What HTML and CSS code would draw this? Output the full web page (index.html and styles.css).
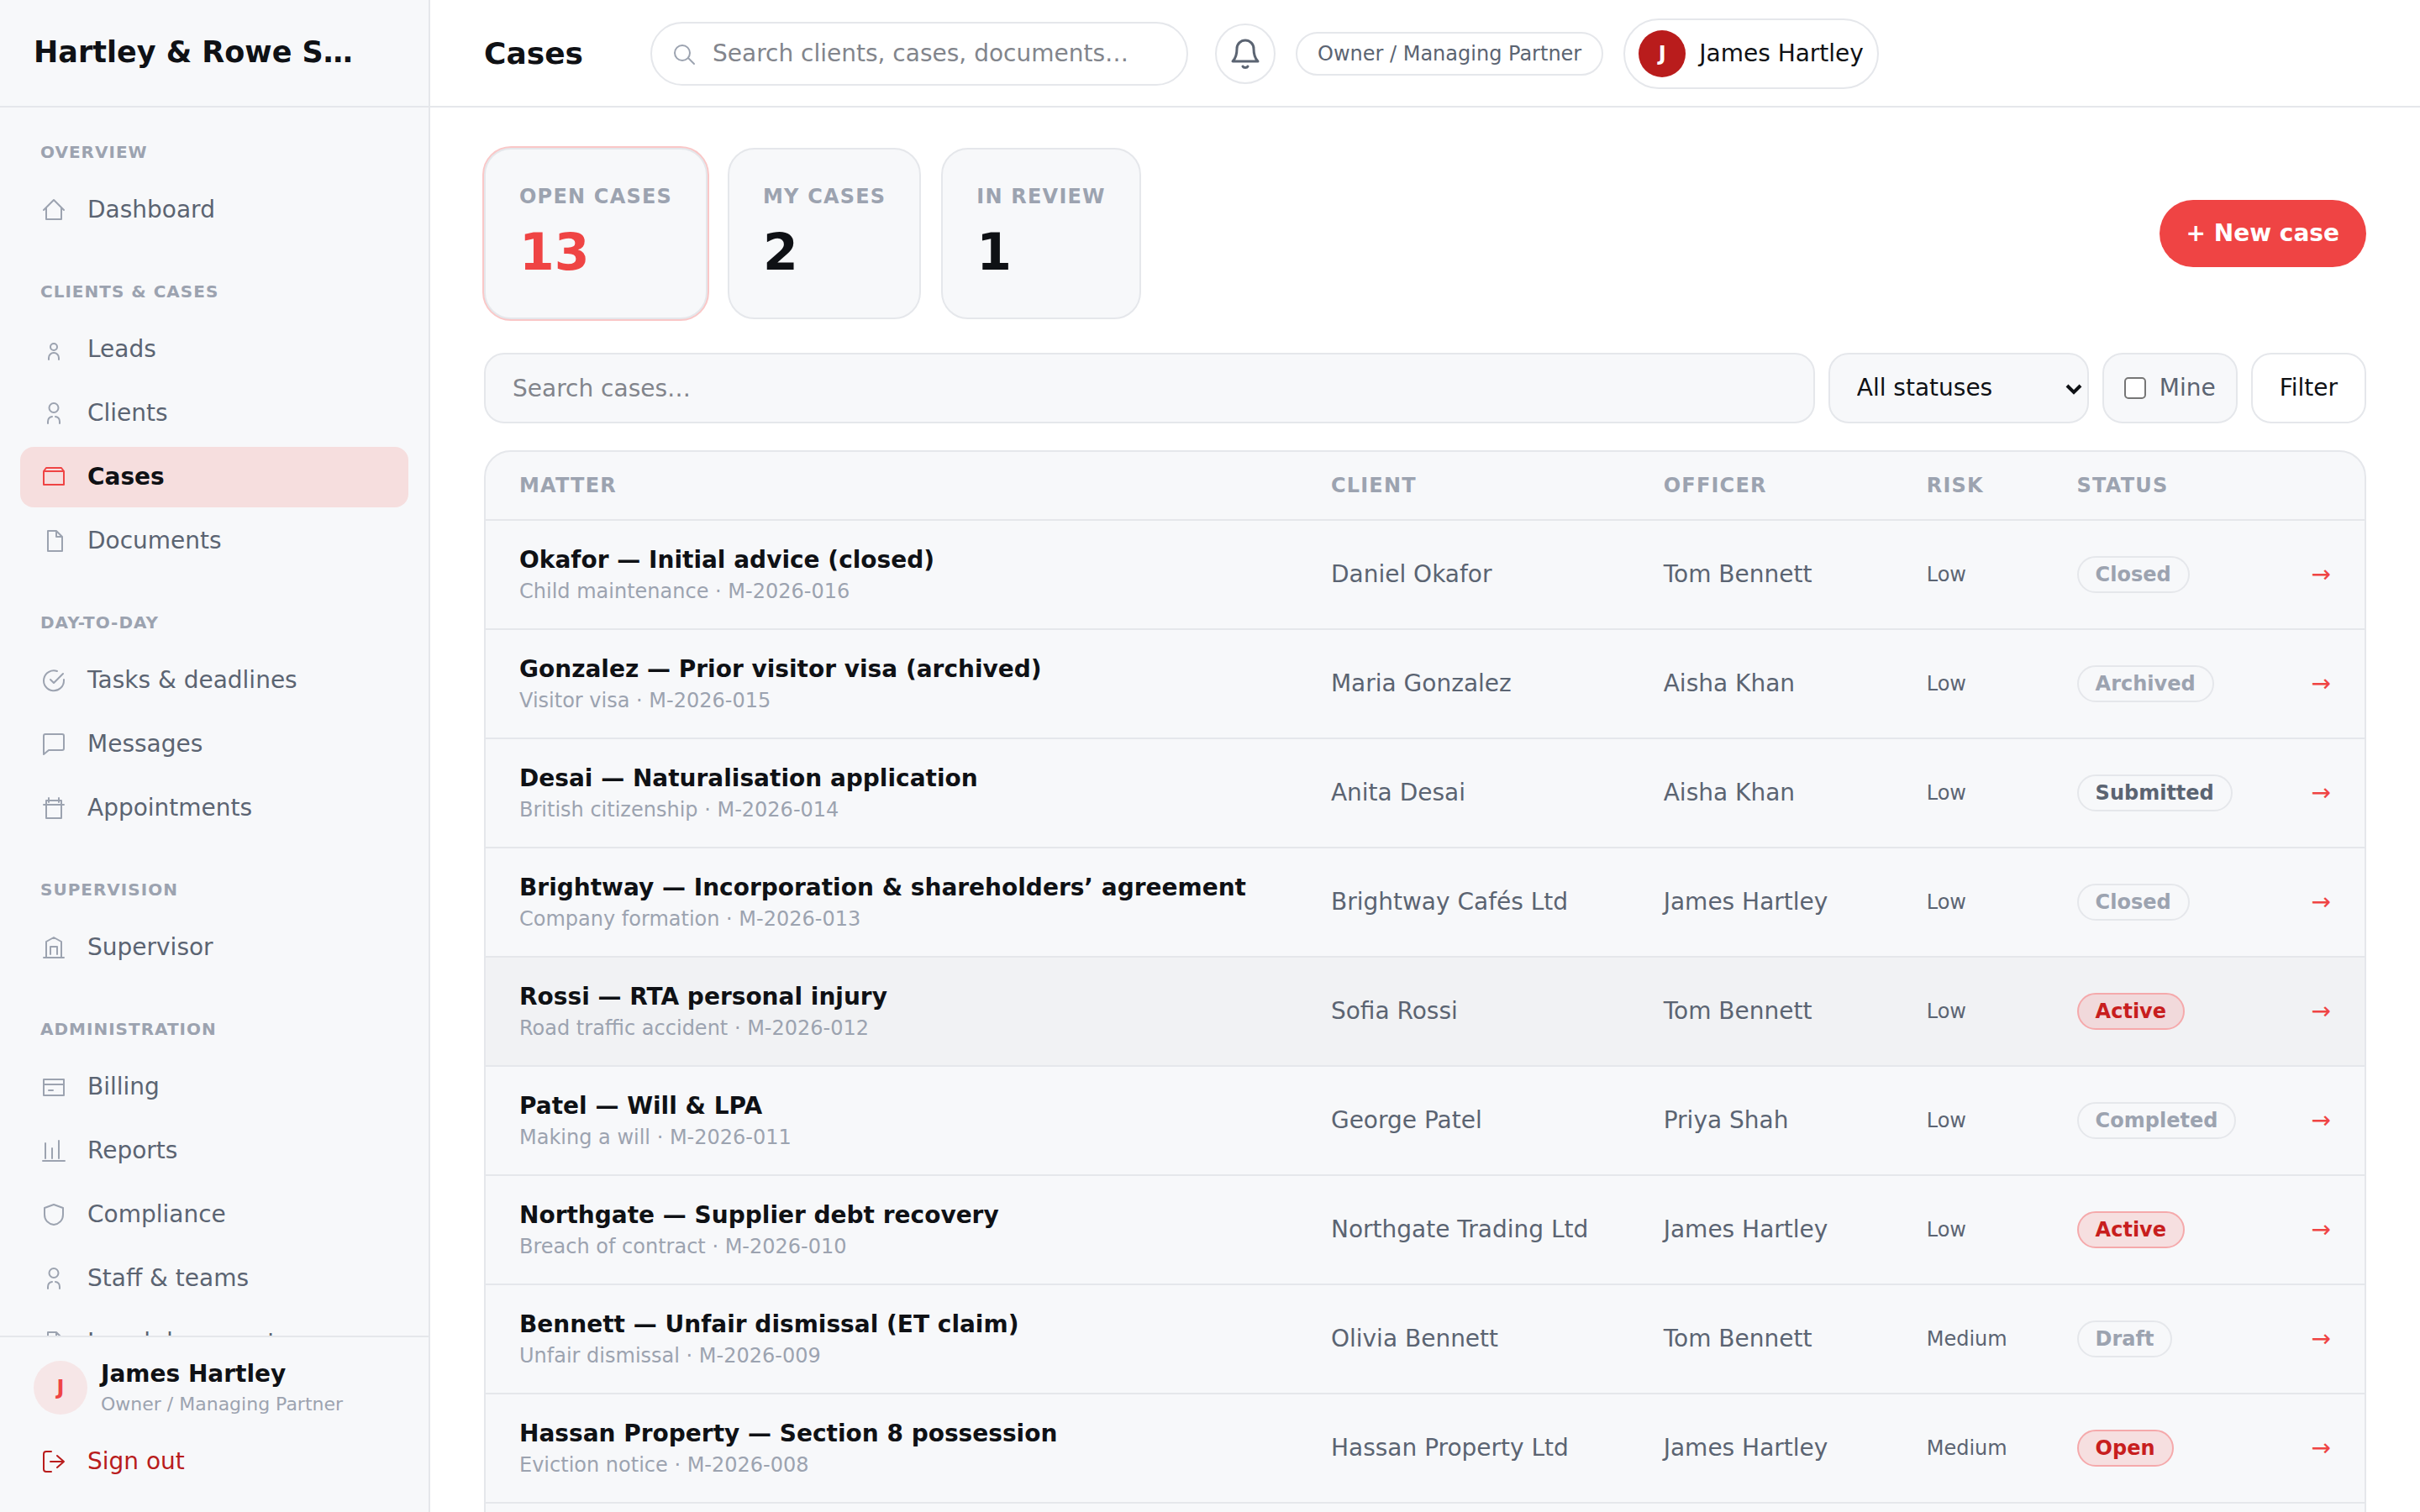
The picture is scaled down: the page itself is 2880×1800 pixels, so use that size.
FILE: index.html
```html
<!DOCTYPE html>
<html lang="en">
<head>
    <meta charset="UTF-8">
    <meta name="viewport" content="width=device-width, initial-scale=1.0">
    <title>Cases</title>
    <link rel="stylesheet" href="styles.css">
</head>
<body>
    <div class="shell">
        <aside class="sidebar">
            <div class="brand">Hartley &amp; Rowe S…</div>

            <nav class="nav">
                <div class="nav-group">
                    <h2>Overview</h2>
                    <a href="#"><svg viewBox="0 0 32 32"><path d="M4 16 16 4l12 12M7 13v14h18V13"/></svg>Dashboard</a>
                </div>
                <div class="nav-group">
                    <h2>Clients &amp; cases</h2>
                    <a href="#"><svg viewBox="0 0 32 32"><circle cx="16" cy="13" r="4"/><path d="M10 28v-2a6 6 0 0 1 12 0v2"/></svg>Leads</a>
                    <a href="#"><svg viewBox="0 0 32 32"><circle cx="16" cy="9.500" r="5.500"/><path d="M9 28v-2c0-3 2-5.500 5-6M18 20c3 .5 5 3 5 6v2"/></svg>Clients</a>
                    <a href="#" class="active"><svg viewBox="0 0 32 32"><path d="M4 9h24v16H4zM4 9l3-4h18l3 4"/></svg>Cases</a>
                    <a href="#"><svg viewBox="0 0 32 32"><path d="M9 4h10l7 7v17H9zM19 4v7h7"/></svg>Documents</a>
                </div>
                <div class="nav-group">
                    <h2>Day-to-day</h2>
                    <a href="#"><svg viewBox="0 0 32 32"><path d="M28 15v1a12 12 0 1 1-8-11M12 15l4 4L27 8"/></svg>Tasks &amp; deadlines</a>
                    <a href="#"><svg viewBox="0 0 32 32"><path d="M28 21a2 2 0 0 1-2 2H10l-6 5V6a2 2 0 0 1 2-2h20a2 2 0 0 1 2 2z"/></svg>Messages</a>
                    <a href="#"><svg viewBox="0 0 32 32"><path d="M7 7h18v21H7zM4 12h24M10 4v5M22 4v5"/></svg>Appointments</a>
                </div>
                <div class="nav-group">
                    <h2>Supervision</h2>
                    <a href="#"><svg viewBox="0 0 32 32"><path d="M4 28h24M7 28V9l9-5 9 5v19M12 24v-9h8v9"/></svg>Supervisor</a>
                </div>
                <div class="nav-group">
                    <h2>Administration</h2>
                    <a href="#"><svg viewBox="0 0 32 32"><path d="M4 7h24v19H4zM4 13h24M10 20h5"/></svg>Billing</a>
                    <a href="#"><svg viewBox="0 0 32 32"><path d="M3 28h26M6 7v18M14 13v12M22 4v21"/></svg>Reports</a>
                    <a href="#"><svg viewBox="0 0 32 32"><path d="M16 4 27 8v8c0 7-5 11-11 12C10 27 5 23 5 16V8z"/></svg>Compliance</a>
                    <a href="#"><svg viewBox="0 0 32 32"><circle cx="16" cy="9.500" r="5.500"/><path d="M9 28v-2c0-3 2-5.500 5-6M18 20c3 .5 5 3 5 6v2"/></svg>Staff &amp; teams</a>
                    <a href="#"><svg viewBox="0 0 32 32"><path d="M9 4h10l7 7v17H9zM19 4v7h7"/></svg>Legal documents</a>
                </div>
            </nav>

            <div class="account">
                <div class="account-user">
                    <span class="avatar-soft">J</span>
                    <div>
                        <div class="account-name">James Hartley</div>
                        <div class="account-role">Owner / Managing Partner</div>
                    </div>
                </div>
                <a href="#" class="sign-out"><svg viewBox="0 0 32 32"><path d="M13 4H7a3 3 0 0 0-3 3v18a3 3 0 0 0 3 3h6M12 16h16M20 9l8 7-8 7"/></svg>Sign out</a>
            </div>
        </aside>

        <div class="page">
            <header class="topbar">
                <h1>Cases</h1>
                <label class="global-search">
                    <svg viewBox="0 0 32 32"><circle cx="12" cy="15" r="9"/><path d="m19 21 7 7"/></svg>
                    <input type="search" placeholder="Search clients, cases, documents…" aria-label="Search clients, cases, documents">
                </label>
                <button class="bell" type="button" aria-label="Notifications">
                    <svg viewBox="0 0 36 36"><path d="M28 12a10 10 0 0 0-20 0c0 8-2 12-5 15h30c-3-3-5-7-5-15M21 33c-1 2-5 2-6 0"/></svg>
                </button>
                <span class="role">Owner / Managing Partner</span>
                <button class="profile" type="button"><span class="avatar">J</span>James Hartley</button>
            </header>

            <main class="content">
                <div class="summary">
                    <div class="stats">
                        <a href="#" class="stat selected"><span class="stat-label">Open cases</span><span class="stat-value">13</span></a>
                        <a href="#" class="stat"><span class="stat-label">My cases</span><span class="stat-value">2</span></a>
                        <a href="#" class="stat"><span class="stat-label">In review</span><span class="stat-value">1</span></a>
                    </div>
                    <button class="new-case" type="button">+ New case</button>
                </div>

                <form class="filters">
                    <input class="field case-search" type="search" placeholder="Search cases…" aria-label="Search cases">
                    <div class="select-wrap">
                        <select class="field" aria-label="Status">
                            <option>All statuses</option>
                        </select>
                        <svg viewBox="0 0 20 14"><path d="m2 3 8 8 8-8"/></svg>
                    </div>
                    <label class="field mine"><input type="checkbox">Mine</label>
                    <button class="field filter-btn" type="button">Filter</button>
                </form>

                <div class="panel">
                    <table>
                        <colgroup>
                            <col class="col-matter">
                            <col class="col-client">
                            <col class="col-officer">
                            <col class="col-risk">
                            <col class="col-status">
                            <col class="col-open">
                        </colgroup>
                        <thead>
                            <tr><th>Matter</th><th>Client</th><th>Officer</th><th>Risk</th><th>Status</th><th></th></tr>
                        </thead>
                        <tbody>
                            <tr>
                                <td><div class="matter">Okafor — Initial advice (closed)</div><div class="meta">Child maintenance · M-2026-016</div></td>
                                <td>Daniel Okafor</td><td>Tom Bennett</td><td class="risk">Low</td>
                                <td><span class="badge">Closed</span></td><td class="open"><a href="#">→</a></td>
                            </tr>
                            <tr>
                                <td><div class="matter">Gonzalez — Prior visitor visa (archived)</div><div class="meta">Visitor visa · M-2026-015</div></td>
                                <td>Maria Gonzalez</td><td>Aisha Khan</td><td class="risk">Low</td>
                                <td><span class="badge">Archived</span></td><td class="open"><a href="#">→</a></td>
                            </tr>
                            <tr>
                                <td><div class="matter">Desai — Naturalisation application</div><div class="meta">British citizenship · M-2026-014</div></td>
                                <td>Anita Desai</td><td>Aisha Khan</td><td class="risk">Low</td>
                                <td><span class="badge badge-dark">Submitted</span></td><td class="open"><a href="#">→</a></td>
                            </tr>
                            <tr>
                                <td><div class="matter">Brightway — Incorporation &amp; shareholders’ agreement</div><div class="meta">Company formation · M-2026-013</div></td>
                                <td>Brightway Cafés Ltd</td><td>James Hartley</td><td class="risk">Low</td>
                                <td><span class="badge">Closed</span></td><td class="open"><a href="#">→</a></td>
                            </tr>
                            <tr class="current">
                                <td><div class="matter">Rossi — RTA personal injury</div><div class="meta">Road traffic accident · M-2026-012</div></td>
                                <td>Sofia Rossi</td><td>Tom Bennett</td><td class="risk">Low</td>
                                <td><span class="badge badge-red">Active</span></td><td class="open"><a href="#">→</a></td>
                            </tr>
                            <tr>
                                <td><div class="matter">Patel — Will &amp; LPA</div><div class="meta">Making a will · M-2026-011</div></td>
                                <td>George Patel</td><td>Priya Shah</td><td class="risk">Low</td>
                                <td><span class="badge">Completed</span></td><td class="open"><a href="#">→</a></td>
                            </tr>
                            <tr>
                                <td><div class="matter">Northgate — Supplier debt recovery</div><div class="meta">Breach of contract · M-2026-010</div></td>
                                <td>Northgate Trading Ltd</td><td>James Hartley</td><td class="risk">Low</td>
                                <td><span class="badge badge-red">Active</span></td><td class="open"><a href="#">→</a></td>
                            </tr>
                            <tr>
                                <td><div class="matter">Bennett — Unfair dismissal (ET claim)</div><div class="meta">Unfair dismissal · M-2026-009</div></td>
                                <td>Olivia Bennett</td><td>Tom Bennett</td><td class="risk">Medium</td>
                                <td><span class="badge">Draft</span></td><td class="open"><a href="#">→</a></td>
                            </tr>
                            <tr>
                                <td><div class="matter">Hassan Property — Section 8 possession</div><div class="meta">Eviction notice · M-2026-008</div></td>
                                <td>Hassan Property Ltd</td><td>James Hartley</td><td class="risk">Medium</td>
                                <td><span class="badge badge-red">Open</span></td><td class="open"><a href="#">→</a></td>
                            </tr>
                            <tr><td colspan="6"></td></tr>
                        </tbody>
                    </table>
                </div>
            </main>
        </div>
    </div>
</body>
</html>
```
FILE: styles.css
```css
:root {
    --bg: #ffffff;
    --surface: #f7f8fa;
    --line: #e5e7eb;
    --ink: #0f1115;
    --body: #5b6472;
    --muted: #9ca3b0;
    --accent: #ef4444;
    --accent-dark: #b91c1c;
}

* {
    box-sizing: border-box;
}

body {
    margin: 0;
    background: var(--bg);
    color: var(--ink);
    font-family: "DejaVu Sans", sans-serif;
    font-size: 28px;
    line-height: 40px;
}

a {
    color: inherit;
    text-decoration: none;
}

button,
input,
select {
    font: inherit;
    color: inherit;
}

button {
    cursor: pointer;
}

svg {
    flex: none;
    fill: none;
    stroke: currentColor;
    stroke-width: 2;
    stroke-linecap: round;
    stroke-linejoin: round;
}

.shell {
    display: flex;
    height: 100vh;
    overflow: hidden;
}

/* Sidebar */
.sidebar {
    display: flex;
    flex-direction: column;
    flex: none;
    width: 512px;
    background: var(--surface);
    border-right: 2px solid var(--line);
}

.brand {
    flex: none;
    height: 128px;
    padding: 0 40px;
    border-bottom: 2px solid var(--line);
    font-size: 35px;
    font-weight: bold;
    line-height: 124px;
    white-space: nowrap;
    overflow: hidden;
}

.nav {
    flex: 1;
    min-height: 0;
    padding: 38px 24px 0;
    overflow: hidden;
}

.nav-group {
    display: flex;
    flex-direction: column;
    gap: 4px;
    margin-bottom: 46px;
}

.nav-group h2 {
    margin: 0 0 14px;
    padding: 0 24px;
    color: var(--muted);
    font-size: 20px;
    line-height: 30px;
    letter-spacing: 0.05em;
    text-transform: uppercase;
}

.nav a,
.sign-out {
    display: flex;
    align-items: center;
    gap: 24px;
    height: 72px;
    padding: 0 24px;
    border-radius: 16px;
    color: var(--body);
}

.nav svg,
.sign-out svg {
    width: 32px;
    height: 32px;
}

.nav svg {
    color: var(--muted);
}

.nav .active {
    background: #f6dede;
    color: var(--ink);
    font-weight: bold;
}

.nav .active svg {
    color: var(--accent);
}

.account {
    flex: none;
    padding: 24px;
    border-top: 2px solid var(--line);
}

.account-user {
    display: flex;
    align-items: center;
    gap: 16px;
    padding: 0 16px;
    margin-bottom: 16px;
}

.avatar-soft,
.avatar {
    display: flex;
    align-items: center;
    justify-content: center;
    border-radius: 50%;
    font-weight: bold;
}

.avatar-soft {
    width: 64px;
    height: 64px;
    background: #f6e6e7;
    color: var(--accent);
    font-size: 24px;
}

.account-name {
    font-weight: bold;
}

.account-role {
    color: var(--muted);
    font-size: 22px;
    line-height: 32px;
}

.sign-out {
    color: var(--accent-dark);
}

/* Top bar */
.page {
    display: flex;
    flex-direction: column;
    flex: 1;
    min-width: 0;
}

.topbar {
    display: flex;
    align-items: center;
    gap: 24px;
    flex: none;
    height: 128px;
    padding: 2px 64px 0;
    border-bottom: 2px solid var(--line);
}

.topbar h1 {
    margin: 0 56px 0 0;
    font-size: 36px;
    line-height: 48px;
}

.global-search {
    display: flex;
    align-items: center;
    gap: 16px;
    width: 640px;
    height: 76px;
    margin-right: 8px;
    padding: 0 24px;
    border: 2px solid var(--line);
    border-radius: 38px;
}

.global-search svg {
    width: 32px;
    height: 32px;
    color: var(--muted);
}

.global-search input {
    flex: 1;
    min-width: 0;
    padding: 0;
    border: 0;
    outline: 0;
    background: none;
}

.bell {
    display: flex;
    align-items: center;
    justify-content: center;
    width: 72px;
    height: 72px;
    padding: 0;
    border: 2px solid var(--line);
    border-radius: 50%;
    background: var(--bg);
    color: var(--body);
}

.bell svg {
    width: 36px;
    height: 36px;
    stroke-width: 3;
}

.role {
    padding: 6px 24px;
    border: 2px solid var(--line);
    border-radius: 26px;
    color: var(--body);
    font-size: 24px;
    line-height: 36px;
}

.profile {
    display: flex;
    align-items: center;
    gap: 16px;
    height: 84px;
    padding: 0 16px;
    border: 2px solid var(--line);
    border-radius: 42px;
    background: var(--bg);
}

.avatar {
    width: 56px;
    height: 56px;
    background: var(--accent-dark);
    color: #fff;
    font-size: 24px;
}

/* Summary cards */
.content {
    flex: 1;
    min-height: 0;
    padding: 48px 64px 0;
    overflow: hidden;
}

.summary {
    display: flex;
    align-items: center;
    justify-content: space-between;
    margin-bottom: 40px;
}

.stats {
    display: flex;
    gap: 24px;
}

.stat {
    display: flex;
    flex-direction: column;
    gap: 12px;
    padding: 40px;
    border: 2px solid var(--line);
    border-radius: 32px;
    background: var(--surface);
}

.stat.selected {
    box-shadow: 0 0 0 2px #fac7c7;
}

.stat-label {
    color: var(--muted);
    font-size: 24px;
    font-weight: bold;
    line-height: 32px;
    letter-spacing: 0.05em;
    text-transform: uppercase;
}

.stat-value {
    font-size: 60px;
    font-weight: bold;
    line-height: 76px;
}

.selected .stat-value {
    color: var(--accent);
}

.new-case {
    height: 80px;
    padding: 0 32px;
    border: 0;
    border-radius: 40px;
    background: var(--accent);
    color: #fff;
    font-weight: bold;
}

/* Filters */
.filters {
    display: flex;
    gap: 16px;
    margin-bottom: 32px;
}

.field {
    height: 84px;
    padding: 0 32px;
    border: 2px solid var(--line);
    border-radius: 24px;
    background: var(--surface);
}

.case-search {
    flex: 1;
    min-width: 0;
    appearance: none;
}

input::placeholder {
    color: #82858c;
}

.select-wrap {
    position: relative;
}

.select-wrap select {
    width: 310px;
    appearance: none;
}

.select-wrap svg {
    position: absolute;
    right: 8px;
    top: 36px;
    width: 20px;
    height: 14px;
    stroke-width: 4;
    stroke-linecap: butt;
    stroke-linejoin: miter;
    pointer-events: none;
}

.mine {
    display: flex;
    align-items: center;
    gap: 16px;
    padding: 0 24px;
    color: var(--body);
}

.mine input {
    width: 26px;
    height: 26px;
    margin: 0;
    border: 2px solid #767676;
    border-radius: 5px;
    background: #fff;
    appearance: none;
}

.filter-btn {
    background: var(--bg);
}

/* Case table */
.panel {
    border: 2px solid var(--line);
    border-radius: 32px;
    background: var(--surface);
    overflow: hidden;
}

table {
    width: 100%;
    border-collapse: separate;
    border-spacing: 0;
    table-layout: fixed;
}

.col-matter { width: 43.2%; }
.col-client { width: 17.7%; }
.col-officer { width: 14%; }
.col-risk { width: 8%; }
.col-status { width: 10%; }

th,
td {
    padding: 0 0 0 40px;
    border-bottom: 2px solid var(--line);
    text-align: left;
    white-space: nowrap;
}

th {
    height: 82px;
    color: var(--muted);
    font-size: 24px;
    letter-spacing: 0.05em;
    text-transform: uppercase;
}

td {
    height: 130px;
    color: var(--body);
}

.current td {
    background: #f1f2f4;
}

.matter {
    color: var(--ink);
    font-weight: bold;
}

.meta {
    color: var(--muted);
    font-size: 24px;
    line-height: 34px;
}

.risk {
    font-size: 24px;
}

.badge {
    display: inline-block;
    padding: 0 20px;
    border: 2px solid var(--line);
    border-radius: 22px;
    color: var(--muted);
    font-size: 24px;
    font-weight: bold;
    vertical-align: middle;
}

.badge-dark {
    color: var(--body);
}

.badge-red {
    background: rgba(239, 68, 68, 0.14);
    border-color: #f5a9ab;
    color: #c81e1e;
}

.open {
    padding-right: 40px;
    color: var(--accent);
    text-align: right;
}
```
